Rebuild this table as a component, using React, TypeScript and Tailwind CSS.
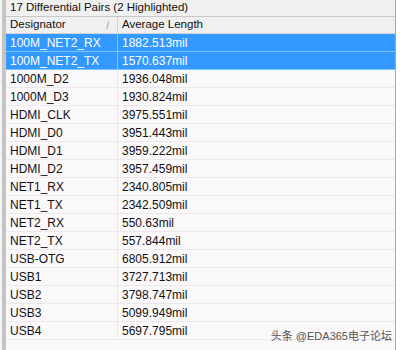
const rows: [string, string][] = [
  ['100M_NET2_RX', '1882.513mil'],
  ['100M_NET2_TX', '1570.637mil'],
  ['1000M_D2', '1936.048mil'],
  ['1000M_D3', '1930.824mil'],
  ['HDMI_CLK', '3975.551mil'],
  ['HDMI_D0', '3951.443mil'],
  ['HDMI_D1', '3959.222mil'],
  ['HDMI_D2', '3957.459mil'],
  ['NET1_RX', '2340.805mil'],
  ['NET1_TX', '2342.509mil'],
  ['NET2_RX', '550.63mil'],
  ['NET2_TX', '557.844mil'],
  ['USB-OTG', '6805.912mil'],
  ['USB1', '3727.713mil'],
  ['USB2', '3798.747mil'],
  ['USB3', '5099.949mil'],
  ['USB4', '5697.795mil'],
];

export default function App() {
  return (
    <div
      className="relative w-[400px] h-[350px] bg-white overflow-hidden text-[12px] text-[#111]"
      style={{ fontFamily: '"Liberation Sans", Arial, sans-serif' }}
    >
      <div className="flex h-full">
        <div className="w-[2px] bg-[#f4f4f4]" />
        <div className="w-[4px] bg-[#c4c4c4]" />
        <div className="flex flex-col w-[390px] border-r border-[#a8a8a8] bg-[#fbf8fa]">
          <div className="h-[17px] flex items-center px-[4px] bg-[#f0f0f0] border-b border-[#c8c8c8] text-[11.5px]">
            17 Differential Pairs (2 Highlighted)
          </div>
          <div className="h-[17px] flex bg-[#f0f0f0] border-b border-[#d4d4d4] text-[11.5px]">
            <div className="w-[112px] flex items-center justify-between pl-[4px] pr-[8px] border-r border-[#d0d0d0]">
              <span>Designator</span>
              <span className="text-[#999] text-[10px]">/</span>
            </div>
            <div className="flex items-center pl-[4px]">Average Length</div>
          </div>
          {rows.map(([name, len], i) => {
            const sel = i < 2;
            return (
              <div
                key={name}
                className={
                  sel
                    ? 'h-[18px] flex bg-[#3399ff] text-white border-b border-[#7cc4ff]'
                    : 'h-[18px] flex border-b border-[#ebe7ea]'
                }
              >
                <div
                  className={
                    sel
                      ? 'w-[112px] flex items-center pl-[4px] border-r border-[#7cc4ff]'
                      : 'w-[112px] flex items-center pl-[4px] border-r border-[#ebe7ea]'
                  }
                >
                  {name}
                </div>
                <div className="flex items-center pl-[4px]">{len}</div>
              </div>
            );
          })}
        </div>
      </div>
      <div
        className="absolute right-[8px] bottom-[6px] text-[11px] text-[#555]"
        style={{ fontFamily: '"Liberation Sans", "Noto Sans CJK SC", sans-serif' }}
      >
        头条 @EDA365电子论坛
      </div>
    </div>
  );
}
